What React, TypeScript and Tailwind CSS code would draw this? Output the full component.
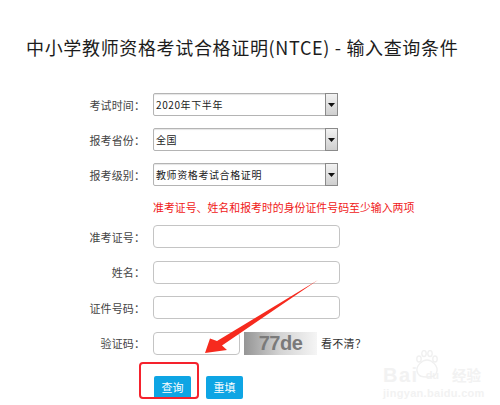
const FONT = "font-['Noto_Sans_CJK_SC','Noto_Sans',sans-serif]";

const Label = ({ children }: { children: string }) => (
  <span className="w-[147px] shrink-0 pr-[2px] pt-[1px] text-right text-[11px] leading-none tracking-[0.1px] text-[#444]">{children}</span>
);

const SelectRow = ({ label, value }: { label: string; value: string }) => (
  <div className="flex h-[23px] items-center">
    <Label>{label}</Label>
    <div className="ml-[6px] flex h-[23px] w-[185px] items-center justify-between rounded-[2px] border border-[#b4b4b4] bg-white shadow-[inset_0_1px_1px_#e5e5e5]">
      <span className="pl-[2px] text-[10px] leading-none tracking-[0.6px] text-[#222]">{value}</span>
      <span className="mr-[-1px] flex h-[23px] w-[13px] items-center justify-center border border-[#8a8a8a] bg-gradient-to-b from-[#f2f2f2] to-[#cfcfcf]">
        <svg width="7" height="4" viewBox="0 0 7 4">
          <path d="M0 0h7L3.5 4z" fill="#111" />
        </svg>
      </span>
    </div>
  </div>
);

const InputRow = ({ label }: { label: string }) => (
  <div className="flex h-[23px] items-center">
    <Label>{label}</Label>
    <div className="ml-[6px] h-[23px] w-[187px] rounded-[4px] border border-[#c4c4c4] bg-white" />
  </div>
);

export default function App() {
  return (
    <div className={`relative h-[405px] w-[500px] overflow-hidden bg-white ${FONT}`}>
      <h1 className="whitespace-nowrap pl-[26px] pt-[35px] text-[18px] font-normal leading-[24px] tracking-[0.66px] text-[#1c1c1c]">
        中小学教师资格考试合格证明(NTCE) - 输入查询条件
      </h1>

      <div className="mt-[34px] flex flex-col">
        <div className="flex flex-col gap-[12px]">
          <SelectRow label="考试时间：" value="2020年下半年" />
          <SelectRow label="报考省份：" value="全国" />
          <SelectRow label="报考级别：" value="教师资格考试合格证明" />
        </div>

        <p className="mt-[14px] h-[14px] whitespace-nowrap pl-[153px] text-[10.9px] leading-[14px] text-[#f01818]">
          准考证号、姓名和报考时的身份证件号码至少输入两项
        </p>

        <div className="mt-[11px] flex flex-col gap-[12.5px]">
          <InputRow label="准考证号：" />
          <InputRow label="姓名：" />
          <InputRow label="证件号码：" />
          <div className="flex h-[23px] items-center">
            <Label>验证码：</Label>
            <div className="ml-[6px] h-[23px] w-[87px] rounded-[4px] border border-[#c4c4c4] bg-white" />
            <div className="ml-[4px] flex h-[23px] w-[73px] items-center justify-center bg-gradient-to-r from-[#959595] via-[#d4d4d4] to-[#f5f5f5]">
              <span className="font-['Liberation_Sans',sans-serif] text-[20px] font-bold leading-none tracking-[-0.5px] text-[#7a7a7a]">
                77de
              </span>
            </div>
            <span className="ml-[4px] whitespace-nowrap text-[11px] leading-none tracking-[0.3px] text-[#333]">看不清？</span>
          </div>
        </div>

        <div className="mt-[21px] flex gap-[15px] pl-[154px]">
          <button className="h-[23px] w-[37px] rounded-[2px] bg-[#0ea5e4] text-[11px] leading-none text-white">查询</button>
          <button className="h-[23px] w-[37px] rounded-[2px] bg-[#0ea5e4] text-[11px] leading-none text-white">重填</button>
        </div>
      </div>

      {/* annotation drawn over the screenshot */}
      <div className="absolute left-[139px] top-[362px] h-[37px] w-[60px] rounded-[4px] border-[2.5px] border-[#f5222d]" />
      <svg className="absolute left-0 top-0" width="500" height="405" viewBox="0 0 500 405">
        <path d="M318 280 L217 341 L210 338.5 L205 353 L227 350 L222 345.5 Z" fill="#f62a1e" />
      </svg>

      {/* baidu jingyan watermark */}
      <div className="absolute left-[383px] top-[350px] h-[45px] w-[92px] text-[#f2f2f2]">
        <svg className="absolute left-[32px] top-0" width="24" height="30" viewBox="0 0 24 30">
          <g fill="none" stroke="#f0f0f0" strokeWidth="1.4">
            <ellipse cx="4" cy="9" rx="2.2" ry="3" />
            <ellipse cx="9" cy="3.5" rx="2.2" ry="3" />
            <ellipse cx="15" cy="3.5" rx="2.2" ry="3" />
            <ellipse cx="20" cy="9" rx="2.2" ry="3" />
            <path d="M12 10c-5 0-11 6-10 11 1 6 6 6 10 6s9 0 10-6c1-5-5-11-10-11z" />
          </g>
        </svg>
        <div className="flex h-full flex-col pt-[15px]">
          <div className="flex items-center whitespace-nowrap leading-none">
            <span className="font-['Liberation_Sans',sans-serif] text-[20px] font-bold leading-none tracking-[1.5px]">Bai</span>
            <span className="ml-[7px] font-['Liberation_Sans',sans-serif] text-[11px] font-bold leading-none">du</span>
            <span className="ml-[13px] text-[14.5px] font-bold leading-none">经验</span>
          </div>
          <span className="mt-[3px] font-['Liberation_Sans',sans-serif] text-[11px] font-bold leading-none tracking-[0.3px]">jingyan.baidu.com</span>
        </div>
      </div>
    </div>
  );
}
